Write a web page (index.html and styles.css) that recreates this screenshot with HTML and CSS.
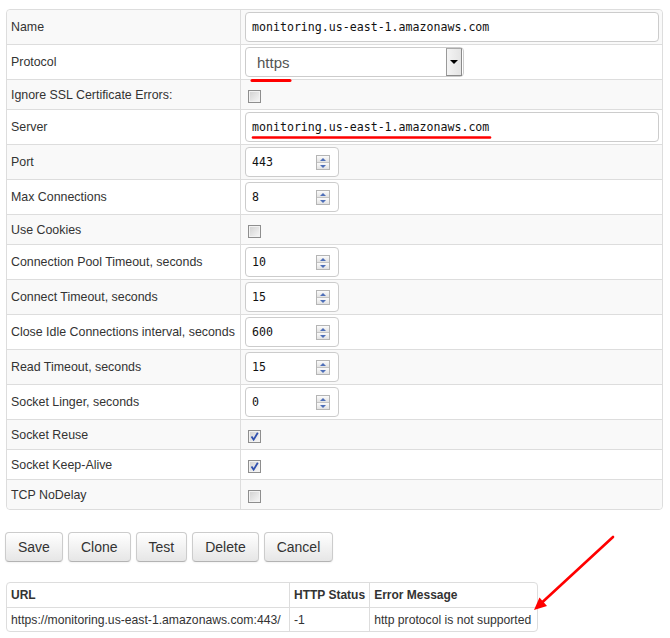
FILE: index.html
```html
<!DOCTYPE html>
<html>
<head>
<meta charset="utf-8">
<link rel="stylesheet" href="styles.css">
</head>
<body>
<div class="page">
  <table class="form">
    <tr class="tall"><td class="lbl">Name</td><td class="val"><div class="text wide">monitoring.us-east-1.amazonaws.com</div></td></tr>
    <tr class="tall"><td class="lbl">Protocol</td><td class="val"><div class="select"><span class="sel-text">https</span><span class="sel-btn"><span class="tri-down"></span></span></div></td></tr>
    <tr class="short"><td class="lbl">Ignore SSL Certificate Errors:</td><td class="val"><span class="cb"></span></td></tr>
    <tr class="tall"><td class="lbl">Server</td><td class="val"><div class="text wide">monitoring.us-east-1.amazonaws.com</div></td></tr>
    <tr class="tall"><td class="lbl">Port</td><td class="val"><div class="text num">443<span class="spin"><span class="up"><i></i></span><span class="dn"><i></i></span></span></div></td></tr>
    <tr class="tall"><td class="lbl">Max Connections</td><td class="val"><div class="text num">8<span class="spin"><span class="up"><i></i></span><span class="dn"><i></i></span></span></div></td></tr>
    <tr class="short"><td class="lbl">Use Cookies</td><td class="val"><span class="cb"></span></td></tr>
    <tr class="tall"><td class="lbl">Connection Pool Timeout, seconds</td><td class="val"><div class="text num">10<span class="spin"><span class="up"><i></i></span><span class="dn"><i></i></span></span></div></td></tr>
    <tr class="tall"><td class="lbl">Connect Timeout, seconds</td><td class="val"><div class="text num">15<span class="spin"><span class="up"><i></i></span><span class="dn"><i></i></span></span></div></td></tr>
    <tr class="tall"><td class="lbl">Close Idle Connections interval, seconds</td><td class="val"><div class="text num">600<span class="spin"><span class="up"><i></i></span><span class="dn"><i></i></span></span></div></td></tr>
    <tr class="tall"><td class="lbl">Read Timeout, seconds</td><td class="val"><div class="text num">15<span class="spin"><span class="up"><i></i></span><span class="dn"><i></i></span></span></div></td></tr>
    <tr class="tall"><td class="lbl">Socket Linger, seconds</td><td class="val"><div class="text num">0<span class="spin"><span class="up"><i></i></span><span class="dn"><i></i></span></span></div></td></tr>
    <tr class="short"><td class="lbl">Socket Reuse</td><td class="val"><span class="cb"><svg width="11" height="11" viewBox="0 0 11 11"><path d="M2.5 5.5 L4.6 8.6 L8.8 1.8" fill="none" stroke="#2f4fae" stroke-width="1.8"/></svg></span></td></tr>
    <tr class="short"><td class="lbl">Socket Keep-Alive</td><td class="val"><span class="cb"><svg width="11" height="11" viewBox="0 0 11 11"><path d="M2.5 5.5 L4.6 8.6 L8.8 1.8" fill="none" stroke="#2f4fae" stroke-width="1.8"/></svg></span></td></tr>
    <tr class="short"><td class="lbl">TCP NoDelay</td><td class="val"><span class="cb"></span></td></tr>
  </table>

  <div class="buttons">
    <button class="btn">Save</button>
    <button class="btn">Clone</button>
    <button class="btn">Test</button>
    <button class="btn">Delete</button>
    <button class="btn">Cancel</button>
  </div>

  <table class="results">
    <tr class="head"><th class="c-url">URL</th><th class="c-status">HTTP Status</th><th class="c-err">Error Message</th></tr>
    <tr class="body"><td>https://monitoring.us-east-1.amazonaws.com:443/</td><td>-1</td><td>http protocol is not supported</td></tr>
  </table>
</div>

<svg class="overlay" width="670" height="638" viewBox="0 0 670 638">
  <line x1="252" y1="80.5" x2="290" y2="80.5" stroke="#f00" stroke-width="3" stroke-linecap="round"/>
  <line x1="253" y1="137.5" x2="490" y2="137.5" stroke="#f00" stroke-width="2.6" stroke-linecap="round"/>
  <line x1="613" y1="537" x2="542" y2="602.5" stroke="#f00" stroke-width="2.6" stroke-linecap="round"/>
  <polygon points="534,610 547,606 539.5,597.5" fill="#f00"/>
</svg>
</body>
</html>
```

FILE: styles.css
```css
html, body {
  margin: 0;
  padding: 0;
  background: #fff;
}

body {
  font-family: "Liberation Sans", Arial, sans-serif;
  font-size: 12.4px;
  color: #333;
  position: relative;
  width: 670px;
  height: 638px;
  overflow: hidden;
}

.page {
  padding: 9px 0 0 6px;
}

.form {
  width: 657px;
  border-collapse: separate;
  border-spacing: 0;
  border: 1px solid #ddd;
  border-radius: 4px;
}

.form td {
  padding: 0 0 0 4px;
  vertical-align: middle;
  border-top: 1px solid #ddd;
}

.form tr:first-child td {
  border-top: 0;
}

.form tr:nth-child(odd) td {
  background: #f9f9f9;
}

.form tr:first-child td:first-child { border-top-left-radius: 4px; }
.form tr:first-child td:last-child { border-top-right-radius: 4px; }
.form tr:last-child td:first-child { border-bottom-left-radius: 4px; }
.form tr:last-child td:last-child { border-bottom-right-radius: 4px; }

.form .tall td { height: 34px; }
.form .short td { height: 29px; }

.form td.lbl {
  width: 229px;
  white-space: nowrap;
}

.form td.val {
  border-left: 1px solid #ddd;
}

.text {
  box-sizing: border-box;
  height: 30px;
  border: 1px solid #ccc;
  border-radius: 4px;
  background: #fff;
  font-family: "DejaVu Sans Mono", "Liberation Mono", monospace;
  font-size: 11.6px;
  color: #111;
  line-height: 28px;
  padding-left: 6px;
  position: relative;
}

.text.wide { width: 414px; }
.text.num { width: 94px; }

.spin {
  position: absolute;
  right: 8px;
  top: 7px;
  width: 14px;
  height: 15px;
  display: flex;
  flex-direction: column;
  box-sizing: border-box;
  border: 1px solid #b5b5b5;
  background: #f0f0f0;
}

.spin .up, .spin .dn {
  flex: 1;
  display: flex;
  align-items: center;
  justify-content: center;
  background: linear-gradient(#fbfbfb, #e2e2e2);
}

.spin .up { border-bottom: 1px solid #c4c4c4; }

.spin i {
  display: block;
  width: 0;
  height: 0;
  border-left: 3px solid transparent;
  border-right: 3px solid transparent;
}

.spin .up i { border-bottom: 3px solid #4e6fb8; }
.spin .dn i { border-top: 3px solid #4e6fb8; }

.select {
  box-sizing: border-box;
  width: 219px;
  height: 30px;
  border: 1px solid #ccc;
  border-radius: 4px;
  background: #fff;
  display: flex;
  align-items: center;
  justify-content: space-between;
  padding: 0 1px 0 11px;
}

.sel-text {
  font-size: 15px;
  color: #555;
}

.sel-btn {
  box-sizing: border-box;
  width: 16px;
  height: 28px;
  border: 1px solid #8a8a8a;
  border-top-color: #aaa;
  border-left-color: #9a9a9a;
  background: linear-gradient(90deg, #f4f4f4, #e4e4e4);
  display: flex;
  align-items: center;
  justify-content: center;
}

.tri-down {
  width: 0;
  height: 0;
  border-left: 4px solid transparent;
  border-right: 4px solid transparent;
  border-top: 4px solid #000;
}

.cb {
  display: inline-flex;
  align-items: center;
  justify-content: center;
  box-sizing: border-box;
  width: 13px;
  height: 13px;
  margin-left: 3px;
  vertical-align: middle;
  border: 1px solid #8e8e8e;
  box-shadow: inset 0 0 0 1px #f2f2f2;
  background: linear-gradient(135deg, #d0d0d0, #f8f8f8);
  position: relative;
  top: 1px;
}

.cb svg {
  display: block;
}

.buttons {
  margin-top: 22px;
  margin-left: -1px;
  display: flex;
  gap: 5px;
}

.btn {
  font-family: "Liberation Sans", Arial, sans-serif;
  font-size: 14px;
  line-height: 20px;
  color: #333;
  padding: 4px 12px;
  height: 30px;
  box-sizing: border-box;
  border: 1px solid #ccc;
  border-bottom-color: #b3b3b3;
  border-radius: 4px;
  background: linear-gradient(#ffffff, #e6e6e6);
  box-shadow: inset 0 1px 0 rgba(255,255,255,0.2), 0 1px 2px rgba(0,0,0,0.05);
}

.results {
  margin-top: 20px;
  border-collapse: separate;
  border-spacing: 0;
  border: 1px solid #ddd;
  border-radius: 4px;
  font-size: 12.2px;
  color: #333;
}

.results th, .results td {
  padding: 0 4px;
  text-align: left;
  white-space: nowrap;
  vertical-align: middle;
}

.results th {
  font-weight: bold;
  font-size: 12px;
  height: 24px;
}

.results td {
  height: 23px;
  border-top: 1px solid #ddd;
}

.results th + th, .results td + td {
  border-left: 1px solid #ddd;
}

.results .c-url { width: 274px; }
.results .c-status { width: 70px; }
.results .c-err { width: 159px; }

.overlay {
  position: absolute;
  left: 0;
  top: 0;
  pointer-events: none;
}
```
